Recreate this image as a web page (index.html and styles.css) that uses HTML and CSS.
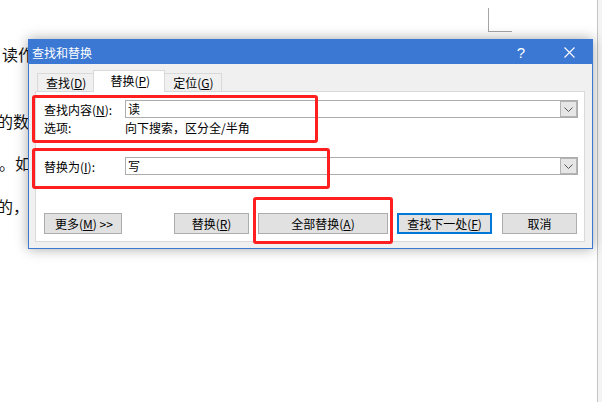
FILE: index.html
```html
<!DOCTYPE html>
<html>
    <head>
        <meta charset="utf-8">
        <title>查找和替换</title>
        <link rel="stylesheet" href="styles.css">
    </head>
    <body>
        <div class="screen">
            <div class="page">
                <div class="corner"></div>
                <p class="line l1">读作者</p>
                <p class="line l2">的数据</p>
                <p class="line l3">。如果</p>
                <p class="line l4">的，也</p>
            </div>
            <div class="edge"></div>

            <div class="dialog">
                <div class="titlebar">
                    <span class="title">查找和替换</span>
                    <span class="help">?</span>
                    <svg class="close" width="11" height="11" viewBox="0 0 11 11">
                        <path d="M0.5 0.5 L10.5 10.5 M10.5 0.5 L0.5 10.5" stroke="#fff" stroke-width="1.1" fill="none"/>
                    </svg>
                </div>
                <div class="dlg-body">
                    <div class="tabs">
                        <span class="tab">查找(<u>D</u>)</span>
                        <span class="tab active">替换(<u>P</u>)</span>
                        <span class="tab">定位(<u>G</u>)</span>
                    </div>
                    <div class="panel">
                        <div class="row">
                            <span class="lbl">查找内容(<u>N</u>):</span>
                            <div class="combo">
                                <span class="val">读</span>
                                <span class="drop">
                                    <svg width="9" height="5" viewBox="0 0 9 5"><path d="M0.5 0.5 L4.5 4.5 L8.5 0.5" stroke="#555" fill="none"/></svg>
                                </span>
                            </div>
                        </div>
                        <div class="row opts">
                            <span class="lbl">选项:</span>
                            <span>向下搜索，区分全/半角</span>
                        </div>
                        <div class="row second">
                            <span class="lbl">替换为(<u>I</u>):</span>
                            <div class="combo">
                                <span class="val">写</span>
                                <span class="drop">
                                    <svg width="9" height="5" viewBox="0 0 9 5"><path d="M0.5 0.5 L4.5 4.5 L8.5 0.5" stroke="#555" fill="none"/></svg>
                                </span>
                            </div>
                        </div>
                        <div class="buttons">
                            <button class="btn more">更多(<u>M</u>) &gt;&gt;</button>
                            <span class="spacer"></span>
                            <button class="btn w75">替换(<u>R</u>)</button>
                            <button class="btn all">全部替换(<u>A</u>)</button>
                            <button class="btn next">查找下一处(<u>F</u>)</button>
                            <button class="btn w75 cancel">取消</button>
                        </div>
                    </div>
                </div>
            </div>

            <div class="mark m1"></div>
            <div class="mark m2"></div>
            <div class="mark m3"></div>
        </div>
    </body>
</html>
```

FILE: styles.css
```css
body {
    margin: 0;
    background: #fff;
    font-family: "Noto Sans CJK SC", "Liberation Sans", sans-serif;
    color: #000;
}
.screen {
    position: relative;
    display: flex;
    width: 602px;
    height: 402px;
    overflow: hidden;
    background: #fff;
}
.page {
    width: 597px;
    overflow: hidden;
}
.edge {
    width: 4px;
    border-left: 1px solid #c4c4c4;
    background: #f4f4f4;
}
.corner {
    width: 23px;
    height: 23px;
    margin: 8px 0 0 488px;
    border-left: 1px solid #a6a6a6;
    border-bottom: 1px solid #a6a6a6;
}
.line {
    margin: 0;
    font-size: 16px;
    line-height: 24px;
    white-space: nowrap;
    color: #111;
}
.l1 { margin-top: 10px; margin-left: 2px; }
.l2 { margin-top: 43px; margin-left: -3px; }
.l3 { margin-top: 18px; margin-left: -1px; }
.l4 { margin-top: 19px; margin-left: -3px; }

/* dialog window */
.dialog {
    position: absolute;
    left: 28px;
    top: 39px;
    width: 563px;
    height: 208px;
    display: flex;
    flex-direction: column;
    border: 1px solid #3b78d4;
    background: #f0f0f0;
    box-shadow: 0 0 12px rgba(0, 0, 0, 0.35);
}
.titlebar {
    display: flex;
    align-items: center;
    height: 24px;
    margin-top: -1px;
    padding-top: 1px;
    background: #3b78d4;
    color: #fff;
    font-size: 12px;
}
.title {
    flex: 1;
    padding-left: 3px;
}
.help {
    font-family: "Liberation Sans", sans-serif;
    font-size: 15px;
    margin-right: 39px;
}
.close {
    margin-right: 17px;
}
.dlg-body {
    flex: 1;
    display: flex;
    flex-direction: column;
    padding: 7px 7px 6px 6px;
}
.tabs {
    display: flex;
    align-items: flex-end;
    height: 20px;
    padding-left: 2px;
    font-size: 12px;
}
.tab {
    height: 17px;
    line-height: 17px;
    padding: 0 7px 0 8px;
    border: 1px solid #d9d9d9;
    border-bottom: none;
    background: #f0f0f0;
}
.tab + .tab {
    margin-left: -1px;
}
.tab.active {
    position: relative;
    z-index: 1;
    height: 21px;
    line-height: 20px;
    margin-bottom: -1px;
    padding: 0 14px 0 16px;
    background: #fff;
}
.panel {
    flex: 1;
    display: flex;
    flex-direction: column;
    padding: 8px 6px 0 8px;
    border: 1px solid #d9d9d9;
    background: #fff;
    font-size: 12px;
}
.row {
    display: flex;
    align-items: center;
}
.lbl {
    width: 81px;
    flex: none;
}
.opts {
    height: 14px;
    margin-top: 2px;
}
.second {
    margin-top: 23px;
}
.combo {
    flex: 1;
    display: flex;
    height: 16px;
    border: 1px solid #acacac;
}
.val {
    flex: 1;
    padding-left: 2px;
    line-height: 16px;
}
.drop {
    display: flex;
    align-items: center;
    justify-content: center;
    width: 17px;
    background: #e6e6e6;
    box-shadow: inset 0 0 0 1px #b4b4b4;
}
.buttons {
    display: flex;
    gap: 9px;
    margin-top: 38px;
    margin-right: 1px;
}
.spacer {
    flex: 1;
}
.btn {
    height: 21px;
    padding: 0;
    font-family: inherit;
    font-size: 12px;
    color: #000;
    background: #e1e1e1;
    border: 1px solid #adadad;
}
.more {
    width: 78px;
    text-align: left;
    padding-left: 10px;
}
.w75 {
    width: 75px;
}
.all {
    width: 130px;
}
.next {
    width: 95px;
    border: 2px solid #0078d7;
}
.cancel {
    margin-left: 1px;
}

/* red annotation boxes */
.mark {
    position: absolute;
    border: 3px solid #ff1f1f;
    border-radius: 3px;
    box-sizing: border-box;
}
.m1 { left: 32px; top: 95px; width: 286px; height: 48px; }
.m2 { left: 32px; top: 148px; width: 298px; height: 41px; }
.m3 { left: 253px; top: 197px; width: 140px; height: 47px; }
```
